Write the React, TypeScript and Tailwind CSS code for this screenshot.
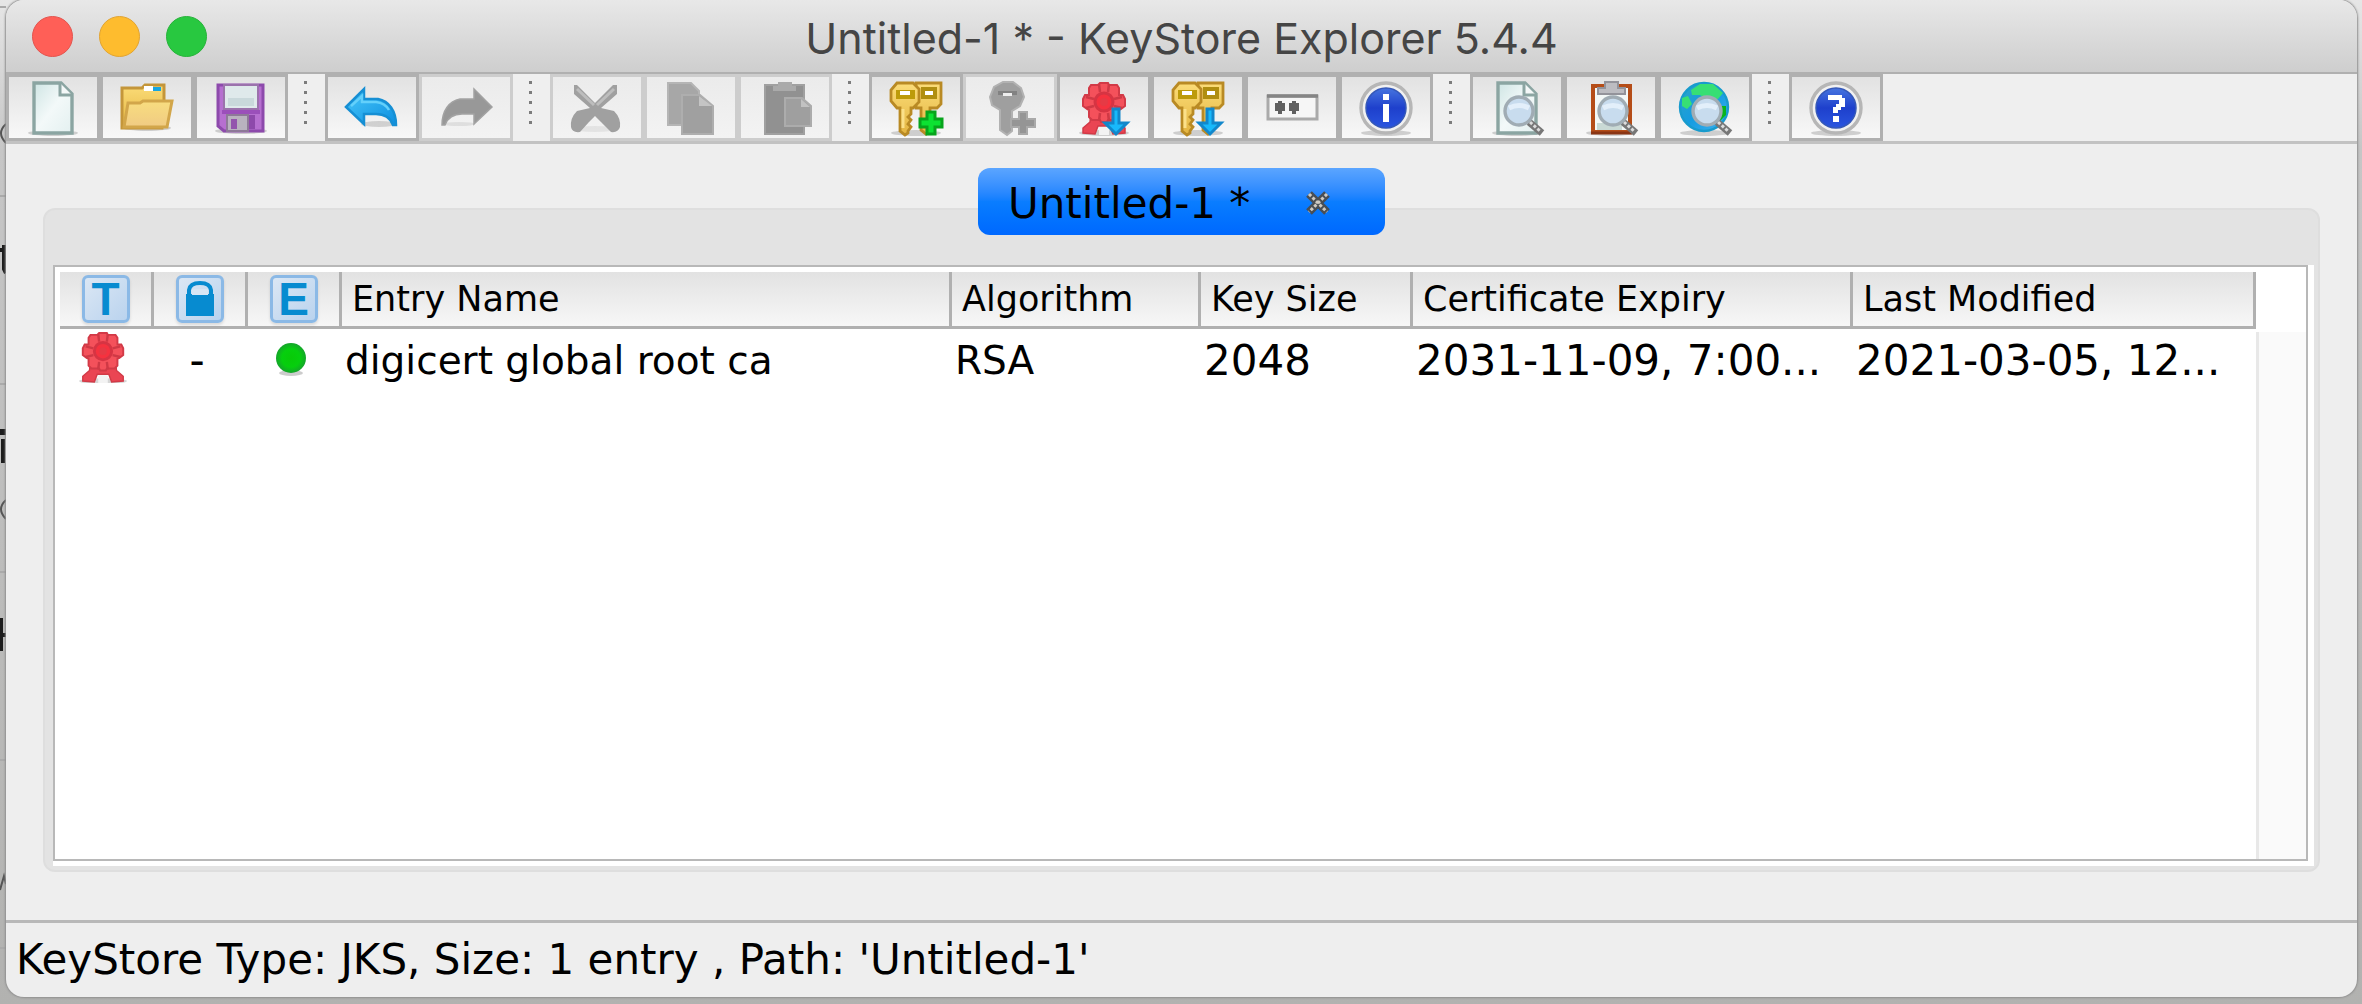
import type { ReactNode } from "react";

type Tool = {
  label: string;
  icon: ReactNode;
  disabled?: boolean;
};

type Entry = {
  name: string;
  algorithm: string;
  keySize: string;
  expiry: string;
  modified: string;
};

const entries: Entry[] = [
  {
    name: "digicert global root ca",
    algorithm: "RSA",
    keySize: "2048",
    expiry: "2031-11-09, 7:00...",
    modified: "2021-03-05, 12...",
  },
];

function Icon({ children }: { children: ReactNode }) {
  return (
    <svg viewBox="0 0 54 54" className="h-[54px] w-[54px] overflow-visible" aria-hidden>
      {children}
    </svg>
  );
}

function Shadow() {
  return <ellipse cx="27" cy="52" rx="25" ry="3" fill="#000" opacity="0.16" />;
}

function Page() {
  return (
    <>
      <path d="M8 2h27l11 11v39H8z" fill="url(#paper)" stroke="#8ba5a2" strokeWidth="3.4" />
      <path d="M34 2v12h12" fill="#f4f8f8" stroke="#8ba5a2" strokeWidth="3" />
    </>
  );
}

function Keys() {
  return (
    <>
      <Shadow />
      <path
        d="M27 2h25v21l-4 4h-7v22l-4 4-5-4V27h-5z"
        fill="url(#gold)"
        stroke="#b98a24"
        strokeWidth="2.8"
      />
      <path d="M34 8h12v8H34z" fill="#fff" stroke="#b08e10" strokeWidth="4" />
      <path
        d="M8 2h16l6 6v13l-6 6h-2v6l-3 3 3 3-3 4 3 3-3 4v2l-3 2-5-4V27H8l-6-7V9z"
        fill="url(#gold)"
        stroke="#b98a24"
        strokeWidth="2.8"
      />
      <path d="M7 9h19v9H7z" fill="#bd9b0a" />
      <path d="M11 10h10v4H11z" fill="#fff" />
      <path d="M14 28v19" stroke="#fbe08a" strokeWidth="3" />
    </>
  );
}

function DownArrow() {
  return (
    <path d="M36 28h6v14h8L39 53 28 42h8z" fill="#18b9fb" stroke="#1287cb" strokeWidth="3" />
  );
}

function Rosette() {
  return (
    <>
      <path
        d="M14 32h26l1 9 7 6v5l-12 1-3-8H21l-3 8-12-1v-5l7-6z"
        fill="#ea4553"
        stroke="#d23a47"
        strokeWidth="1.5"
      />
      <path d="M22 46h10v8H22z" fill="#f3f3f3" />
      <path
        d="M23 2h8l1 2h8l2 3v7h4l2 4v7l-4 3-2 1v7l-3 3h-8l-1 2h-6l-1-2h-8l-3-3v-7l-2-1-4-3v-7l2-4h4V7l2-3h7z"
        fill="#f4515b"
        stroke="#d23a47"
        strokeWidth="2"
      />
      <path
        d="M22 3l1 8M32 3l-1 8M22 40l1-8M32 40l-1-8M9 16l8 2M45 16l-8 2M9 27l8-2M45 27l-8-2"
        stroke="#cf3945"
        strokeWidth="2.5"
      />
      <circle cx="27" cy="21" r="9" fill="#f5323f" stroke="#d63443" strokeWidth="3" />
      <circle cx="27" cy="21" r="4" fill="#e63a45" />
    </>
  );
}

function Lens() {
  return (
    <>
      <path d="M39 41l13 11" stroke="#777" strokeWidth="7" />
      <path d="M40 41l11 10" stroke="#dcdcdc" strokeWidth="3" strokeDasharray="3 2" />
      <circle cx="29" cy="30" r="14" fill="#c8dcee" stroke="#a0acb4" strokeWidth="3.4" />
      <path d="M19 27q10-5 20 0" stroke="#e3effa" strokeWidth="5" fill="none" />
    </>
  );
}

function Badge({ children }: { children: ReactNode }) {
  return (
    <>
      <Shadow />
      <circle cx="27" cy="27" r="25" fill="#f1f1f1" stroke="#b6b6b6" strokeWidth="3.4" />
      <circle cx="27" cy="27" r="20" fill="url(#royal)" stroke="#3558b8" strokeWidth="1.5" />
      {children}
    </>
  );
}

const groups: Tool[][] = [
  [
    { label: "New", icon: <Icon><Shadow /><Page /></Icon> },
    {
      label: "Open",
      icon: (
        <Icon>
          <ellipse cx="27" cy="47" rx="24" ry="3" fill="#000" opacity="0.16" />
          <path d="M2 7h20l3-3h19v19l-2 24H2z" fill="url(#gold)" stroke="#c4963a" strokeWidth="3" />
          <path d="M24 5h9v5h-9z" fill="#fff" />
          <path d="M33 6h8v4h-8z" fill="#17a6df" />
          <path d="M8 22h12l3-2h29l-5 26H4z" fill="url(#flap)" stroke="#d2a64a" strokeWidth="3" />
        </Icon>
      ),
    },
    {
      label: "Save",
      icon: (
        <Icon>
          <ellipse cx="27" cy="50" rx="26" ry="3" fill="#000" opacity="0.16" />
          <path d="M4 4h45v46H10l-6-5z" fill="#b66fd0" stroke="#8d4aac" strokeWidth="3" />
          <path d="M10 4h34v24H10z" fill="#dfe9eb" stroke="#9b72ac" strokeWidth="2" />
          <path d="M14 17h26v8H14z" fill="#c9d8db" />
          <path d="M8 31h38" stroke="#9b4fba" strokeWidth="4" />
          <path d="M13 34h21v16H13z" fill="#b9b2bf" stroke="#8e7998" strokeWidth="2" />
          <path d="M17 38h6v10h-6z" fill="#9355ad" />
          <path d="M35 34h6v14h-6z" fill="#8e49ab" />
        </Icon>
      ),
    },
  ],
  [
    {
      label: "Undo",
      icon: (
        <Icon>
          <ellipse cx="34" cy="43" rx="18" ry="3" fill="#000" opacity="0.14" />
          <path
            d="M1 26L19 8v10h14c11 2 18 12 18 26h-3c-3-8-10-11-17-11H19v10z"
            fill="url(#sky)"
            stroke="#168fd4"
            strokeWidth="2.5"
          />
          <path d="M6 25l11-10v6h14q9 1 13 8" fill="none" stroke="#63d0fb" strokeWidth="2.5" />
        </Icon>
      ),
    },
    {
      label: "Redo",
      disabled: true,
      icon: (
        <Icon>
          <ellipse cx="20" cy="43" rx="16" ry="2" fill="#000" opacity="0.08" />
          <path
            d="M53 26L35 8v10H21C10 20 3 30 3 44h3c3-8 10-11 17-11h12v10z"
            fill="#989898"
            stroke="#a2a2a2"
            strokeWidth="1.5"
          />
        </Icon>
      ),
    },
  ],
  [
    {
      label: "Cut",
      disabled: true,
      icon: (
        <Icon>
          <ellipse cx="25" cy="48" rx="23" ry="3" fill="#000" opacity="0.06" />
          <path
            d="M4 4h3l18 18L43 4h4v9L31 27l13 3q7 7 6 16-2 6-9 5L31 41l-6-6-6 6-9 10q-8 1-9-5-1-9 6-16l13-3L4 13z"
            fill="#a0a0a0"
          />
          <path d="M7 8l17 16M44 8L27 24" stroke="#bdbdbd" strokeWidth="3" />
        </Icon>
      ),
    },
    {
      label: "Copy",
      disabled: true,
      icon: (
        <Icon>
          <path d="M4 2h23l8 8v34H4z" fill="#a7a7a7" stroke="#b5b5b5" strokeWidth="2" />
          <path d="M18 14h18l13 11v28H18z" fill="#a0a0a0" stroke="#aeaeae" strokeWidth="2" />
          <path d="M35 15v10h13" fill="#c4c4c4" />
        </Icon>
      ),
    },
    {
      label: "Paste",
      disabled: true,
      icon: (
        <Icon>
          <path d="M7 4h39v49H7z" fill="#919191" stroke="#a0a0a0" strokeWidth="2" />
          <path d="M20 1h14v4h4v5H15V5h5z" fill="#aaa" />
          <path d="M27 17h17l9 8v20H27z" fill="#9f9f9f" stroke="#acacac" strokeWidth="2" />
          <path d="M43 18v8h9" fill="#c1c1c1" />
        </Icon>
      ),
    },
  ],
  [
    {
      label: "Generate Key Pair",
      icon: (
        <Icon>
          <Keys />
          <path d="M38 31h8v7h7v8h-7v7h-8v-7h-7v-8h7z" fill="#0ce232" stroke="#07a41c" strokeWidth="3" />
        </Icon>
      ),
    },
    {
      label: "Generate Secret Key",
      disabled: true,
      icon: (
        <Icon>
          <path
            d="M20 1h10l8 6 3 9-4 9-8 5v20l-5 4-7-5V29l-8-5-2-8 4-10z"
            fill="#9f9f9f"
            stroke="#b2b2b2"
            strokeWidth="2"
          />
          <path d="M15 10h19v4H15z" fill="#828282" />
          <path d="M20 12h9v3h-9z" fill="#eee" />
          <path d="M36 31h8v7h8v8h-8v7h-8v-7h-8v-8h8z" fill="#959595" stroke="#a9a9a9" strokeWidth="2" />
        </Icon>
      ),
    },
    { label: "Import Trusted Certificate", icon: <Icon><Shadow /><Rosette /><DownArrow /></Icon> },
    { label: "Import Key Pair", icon: <Icon><Keys /><DownArrow /></Icon> },
    {
      label: "Set Password",
      icon: (
        <Icon>
          <path d="M3 15h49v23H3z" fill="#f6f6f6" stroke="#aaa" strokeWidth="3" />
          <path d="M2 15h51" stroke="#858585" strokeWidth="3.4" />
          <path d="M10 22h3v-2h4v2h3v8h-3v3h-4v-3h-3zM24 22h3v-2h4v2h3v8h-3v3h-4v-3h-3z" fill="#606060" />
        </Icon>
      ),
    },
    {
      label: "KeyStore Properties",
      icon: (
        <Icon>
          <Badge><path d="M24 13h6v6h-6zM24 23h6v18h-6z" fill="#fff" /></Badge>
        </Icon>
      ),
    },
  ],
  [
    { label: "Examine File", icon: <Icon><Shadow /><Page /><Lens /></Icon> },
    {
      label: "Examine Clipboard",
      icon: (
        <Icon>
          <Shadow />
          <path d="M9 5h37v46H9z" fill="#f3f8f7" stroke="#b54d18" strokeWidth="4" />
          <path d="M7 52h41" stroke="#8a3514" strokeWidth="3" />
          <path d="M21 1h13v6h7v6H14V7h7z" fill="#bcbcc1" stroke="#93939a" strokeWidth="2" />
          <path d="M13 42h25v7H13z" fill="#c9d9d5" />
          <Lens />
        </Icon>
      ),
    },
    {
      label: "Examine SSL",
      icon: (
        <Icon>
          <Shadow />
          <circle cx="26" cy="26" r="24" fill="url(#ocean)" stroke="#189bcd" strokeWidth="2.4" />
          <path d="M13 9l9-6h13l10 9-5 6H28l-6-4h-8zM4 17l6-2 4 8-5 5-5-3zM39 25h9v9l-8 7-3-8z" fill="#37df74" />
          <path d="M42 25h6v9l-7 7z" fill="#09b51c" />
          <Lens />
        </Icon>
      ),
    },
  ],
  [
    {
      label: "Help",
      icon: (
        <Icon>
          <Badge>
            <path d="M19 14h14v3h3v9h-4v3h-3v3h-5v-6h3v-3h3v-4H19zM24 35h6v6h-6z" fill="#fff" />
          </Badge>
        </Icon>
      ),
    },
  ],
];

function Gradients() {
  return (
    <svg className="absolute h-0 w-0" aria-hidden>
      <defs>
        <linearGradient id="paper" x1="0" y1="0" x2="1" y2="1">
          <stop offset="0" stopColor="#cfe5e4" />
          <stop offset="0.5" stopColor="#f3f9f9" />
          <stop offset="1" stopColor="#e3f0f0" />
        </linearGradient>
        <linearGradient id="gold" x1="0" y1="0" x2="0" y2="1">
          <stop offset="0" stopColor="#fbdc78" />
          <stop offset="1" stopColor="#e3b440" />
        </linearGradient>
        <linearGradient id="flap" x1="0" y1="0" x2="0" y2="1">
          <stop offset="0" stopColor="#f8dd7f" />
          <stop offset="1" stopColor="#f0cb83" />
        </linearGradient>
        <linearGradient id="sky" x1="0" y1="0" x2="1" y2="1">
          <stop offset="0" stopColor="#49c8fa" />
          <stop offset="1" stopColor="#0d8fe0" />
        </linearGradient>
        <linearGradient id="royal" x1="0" y1="0" x2="0" y2="1">
          <stop offset="0" stopColor="#4674df" />
          <stop offset="0.5" stopColor="#1e40cc" />
          <stop offset="1" stopColor="#2a55df" />
        </linearGradient>
        <linearGradient id="ocean" x1="0" y1="0" x2="1" y2="1">
          <stop offset="0" stopColor="#2ea3c4" />
          <stop offset="0.5" stopColor="#159ce0" />
          <stop offset="1" stopColor="#3fb2f2" />
        </linearGradient>
        <radialGradient id="ball">
          <stop offset="0" stopColor="#08ca08" />
          <stop offset="0.6" stopColor="#06cf0e" />
          <stop offset="1" stopColor="#15a52b" />
        </radialGradient>
      </defs>
    </svg>
  );
}

function Separator() {
  return (
    <div className="flex w-[37px] flex-col items-center gap-[7px] pt-[7px] pr-[3px]" role="separator">
      <span className="h-[3px] w-[3px] bg-[#7c7c7c]" />
      <span className="h-[3px] w-[3px] bg-[#7c7c7c]" />
      <span className="h-[3px] w-[3px] bg-[#7c7c7c]" />
      <span className="h-[3px] w-[3px] bg-[#7c7c7c]" />
      <span className="h-[3px] w-[3px] bg-[#7c7c7c]" />
    </div>
  );
}

function HeaderBadge({ children }: { children: ReactNode }) {
  return (
    <span className="mx-auto flex h-12 w-12 items-center justify-center rounded-md border-3 border-[#8bb9e6] bg-linear-to-br from-[#dbe7f4] to-[#bad3ee] text-[46px] leading-[42px] font-bold text-[#078bd0] shadow-[0_2px_3px_rgba(0,0,0,0.12)]">
      {children}
    </span>
  );
}

const iconHead = "w-[94px] border-r-3 border-b-3 border-[#b0b0b0] p-0 font-[Liberation_Sans,sans-serif]";
const textHead = "border-r-3 border-b-3 border-[#b0b0b0] p-0 pl-[10px] text-left font-normal whitespace-nowrap";
const textCell = "p-0 pl-[3px] whitespace-nowrap";

export default function App() {
  return (
    <div className="relative flex min-h-screen flex-col overflow-hidden bg-linear-to-b from-[#e6e6e6] via-[#c6c6c6] via-15% to-[#b2b2b0] pr-[5px] pb-[7px] pl-[6px] font-['DejaVu_Sans',sans-serif] text-black">
      <Gradients />
      {/* Whatever lies behind the window, peeking out on the left */}
      <svg className="absolute top-0 left-0 h-[1004px] w-[6px]" viewBox="0 0 6 1004" aria-hidden>
        <path d="M0 7h6M0 196h6M0 384h6M0 572h6M0 760h6M0 948h6" stroke="#aaa" strokeWidth="2" />
        <path d="M0 250h6M4 245v24l2 4M3 439v24M0 635h6M1 618v33" stroke="#1c1c1c" strokeWidth="4" />
        <path d="M3 429v6" stroke="#1c1c1c" strokeWidth="6" />
        <path d="M6 124q-10 9 0 19M6 500q-10 9 0 19M0 890l4-14 2 8" stroke="#555" strokeWidth="2" fill="none" />
      </svg>

      <div className="relative flex flex-1 flex-col overflow-hidden rounded-[18px] bg-[#eee] shadow-[0_0_2px_1px_#8f8f8f]">
        {/* Title bar */}
        <header className="grid h-[72px] grid-cols-[1fr_auto_1fr] items-center bg-linear-to-b from-[#e8e8e8] to-[#cecece] px-[26px]">
          <div className="flex gap-[26px]">
            <button aria-label="Close" className="h-[41px] w-[41px] rounded-full border border-[#e2544e] bg-[#ff5f57]" />
            <button aria-label="Minimize" className="h-[41px] w-[41px] rounded-full border border-[#e0a333] bg-[#febc2e]" />
            <button aria-label="Zoom" className="h-[41px] w-[41px] rounded-full border border-[#28b23b] bg-[#28c840]" />
          </div>
          <h1 className="pt-1 font-[Inter,sans-serif] text-[43px] leading-[48px] text-[#454545]">
            Untitled-1 * - KeyStore Explorer 5.4.4
          </h1>
        </header>

        {/* Toolbar */}
        <div className="flex h-[72px] border-t-2 border-b-3 border-t-[#b0b0b0] border-b-[#c2c2c2] bg-[#efefef]" role="toolbar">
          {groups.map((group, g) => (
            <div key={group[0].label} className="flex">
              {g > 0 && <Separator />}
              {group.map((tool) => (
                <button
                  key={tool.label}
                  aria-label={tool.label}
                  disabled={tool.disabled}
                  className="flex w-[94px] items-center justify-center border-3 border-[#b0b0b0] bg-linear-to-b from-[#e2e2e2] to-[#f8f8f8] disabled:border-[#cdcdcd] disabled:from-[#ebebeb] disabled:to-[#f3f3f3]"
                >
                  {tool.icon}
                </button>
              ))}
            </div>
          ))}
        </div>

        {/* Keystore tabs */}
        <main className="flex flex-1 flex-col px-[37px] pt-6 pb-12">
          <div className="relative z-10 mx-auto flex h-[67px] w-[407px] items-center rounded-xl bg-linear-to-b from-[#5ba5ff] via-[#0a7dff] to-[#0068ff] pt-1 pl-[30px] text-[42px] leading-[48px]" role="tab" aria-selected>
            <span className="w-[296px] shrink-0">Untitled-1 *</span>
            <button aria-label="Close tab" className="h-7 w-7 shrink-0">
              <svg viewBox="0 0 28 28" aria-hidden>
                <path d="M5 4l18 18M23 4L5 22" stroke="#494e54" strokeWidth="8" />
                <path d="M5 4l18 18M23 4L5 22" stroke="#cfcac2" strokeWidth="3" strokeDasharray="3 2" />
              </svg>
            </button>
          </div>

          <section className="-mt-[27px] flex flex-1 flex-col rounded-xl border-2 border-[#dedede] bg-[#e3e3e3] pt-[55px] pr-1 pb-1 pl-2">
            <div className="flex flex-1 bg-white pr-[6px] pb-[5px]">
              <div className="flex flex-1 border-2 border-[#b8b8b8]">
                <div className="flex-1 pt-[5px] pl-[5px]">
                  <table className="w-full table-fixed border-separate border-spacing-0">
                    <thead>
                      <tr className="h-[57px] bg-linear-to-b from-[#e2e2e2] to-[#f8f8f8] text-[35px] leading-[48px]">
                        <th className={iconHead} aria-label="Type">
                          <HeaderBadge>T</HeaderBadge>
                        </th>
                        <th className={iconHead} aria-label="Lock status">
                          <HeaderBadge>
                            <svg viewBox="0 0 28 36" className="h-9 w-7" aria-hidden>
                              <path d="M0 13h28v22H0z" fill="#078bd0" />
                              <path d="M3 15V9q1-7 11-7t11 7v6" fill="none" stroke="#078bd0" strokeWidth="4" />
                              <path d="M6 8h16v6H6z" fill="#d7e6f4" />
                            </svg>
                          </HeaderBadge>
                        </th>
                        <th className={iconHead} aria-label="Certificate expiry status">
                          <HeaderBadge>E</HeaderBadge>
                        </th>
                        <th className={textHead}>Entry Name</th>
                        <th className={`${textHead} w-[249px]`}>Algorithm</th>
                        <th className={`${textHead} w-[212px]`}>Key Size</th>
                        <th className={`${textHead} w-[440px]`}>Certificate Expiry</th>
                        <th className={`${textHead} w-[403px]`}>Last Modified</th>
                      </tr>
                    </thead>
                    <tbody>
                      {entries.map((e) => (
                        <tr key={e.name} className="h-16 text-[42px] leading-[48px]">
                          <td className="p-0 pr-2 pb-2">
                            <svg viewBox="0 0 54 54" className="mx-auto h-[52px] w-[52px]" aria-hidden>
                              <Shadow />
                              <Rosette />
                            </svg>
                          </td>
                          <td className="p-0 pr-2 text-center">-</td>
                          <td className="p-0 pr-2">
                            <svg viewBox="0 0 32 36" className="mx-auto h-9 w-8" aria-hidden>
                              <ellipse cx="16" cy="30" rx="12" ry="3" fill="#000" opacity="0.2" />
                              <circle cx="16" cy="15" r="15" fill="url(#ball)" />
                            </svg>
                          </td>
                          <td className={`${textCell} text-[39px]`}>{e.name}</td>
                          <td className={`${textCell} text-[39px]`}>{e.algorithm}</td>
                          <td className={textCell}>{e.keySize}</td>
                          <td className={textCell}>{e.expiry}</td>
                          <td className={textCell}>{e.modified}</td>
                        </tr>
                      ))}
                    </tbody>
                  </table>
                </div>
                {/* Scrollbar track */}
                <div className="mt-[65px] w-[50px] border-l-3 border-[#e8e8e8] bg-[#fafafa]" />
              </div>
            </div>
          </section>
        </main>

        <footer className="flex h-[77px] items-center border-t-3 border-[#b8b8b8] px-[10px] text-[42px] leading-[48px] whitespace-nowrap">
          KeyStore Type: JKS, Size: 1 entry , Path: 'Untitled-1'
        </footer>
      </div>
    </div>
  );
}
